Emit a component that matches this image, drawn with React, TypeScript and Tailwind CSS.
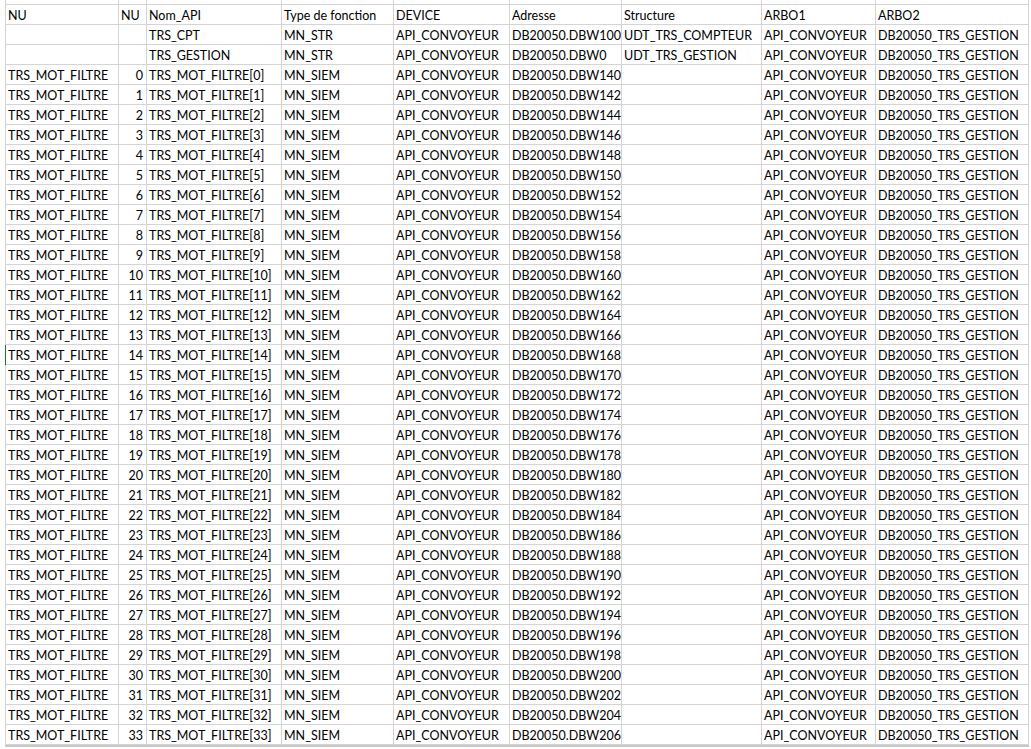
import React from 'react';

const widths = [113, 28, 135, 112, 116, 112, 140, 114, 153];

type Row = string[];

const header: Row = ['NU', 'NU', 'Nom_API', 'Type de fonction', 'DEVICE', 'Adresse', 'Structure', 'ARBO1', 'ARBO2'];

const rows: Row[] = [
	['', '', 'TRS_CPT', 'MN_STR', 'API_CONVOYEUR', 'DB20050.DBW100', 'UDT_TRS_COMPTEUR', 'API_CONVOYEUR', 'DB20050_TRS_GESTION'],
	['', '', 'TRS_GESTION', 'MN_STR', 'API_CONVOYEUR', 'DB20050.DBW0', 'UDT_TRS_GESTION', 'API_CONVOYEUR', 'DB20050_TRS_GESTION'],
	...Array.from({ length: 34 }, (_, i) => [
		'TRS_MOT_FILTRE',
		String(i),
		`TRS_MOT_FILTRE[${i}]`,
		'MN_SIEM',
		'API_CONVOYEUR',
		`DB20050.DBW${140 + i * 2}`,
		'',
		'API_CONVOYEUR',
		'DB20050_TRS_GESTION',
	]),
];

const Cell = ({ w, text, right, h = 'h-5' }: { w: number; text: string; right?: boolean; h?: string }) => (
	<div
		className={`${h} shrink-0 border-r border-b border-[#d4d4d4] overflow-hidden whitespace-nowrap leading-[19px] pt-px ${right ? 'text-right pr-[3px]' : 'pl-[2px]'}`}
		style={{ width: w }}
	>
		{text}
	</div>
);

const SheetRow = ({ cells, marked }: { cells: Row; marked?: boolean }) => (
	<div className='flex'>
		<div className={`w-px h-5 shrink-0 ${marked ? 'bg-[#217346]' : 'bg-[#d4d4d4]'}`}></div>
		{cells.map((c, i) => (
			<Cell key={i} w={widths[i]} text={c} right={i === 1 && c !== 'NU'} />
		))}
	</div>
);

export default function App() {
	return (
		<div className='w-[1031px] h-[749px] bg-white overflow-hidden pl-[5px] text-[12.5px] text-black' style={{ fontFamily: 'Lato, "Liberation Sans", sans-serif' }}>
			<div className='flex'>
				<div className='w-px h-[5px] shrink-0 bg-[#d4d4d4]'></div>
				{widths.map((w, i) => (
					<div key={i} className='h-[5px] shrink-0 border-r border-b border-[#d4d4d4]' style={{ width: w }}></div>
				))}
			</div>
			<SheetRow cells={header} />
			{rows.map((r, i) => (
				<SheetRow key={i} cells={r} marked={i === 16} />
			))}
			<div className='h-[2px] w-[1024px] bg-[#c8c8c8]'></div>
		</div>
	);
}
